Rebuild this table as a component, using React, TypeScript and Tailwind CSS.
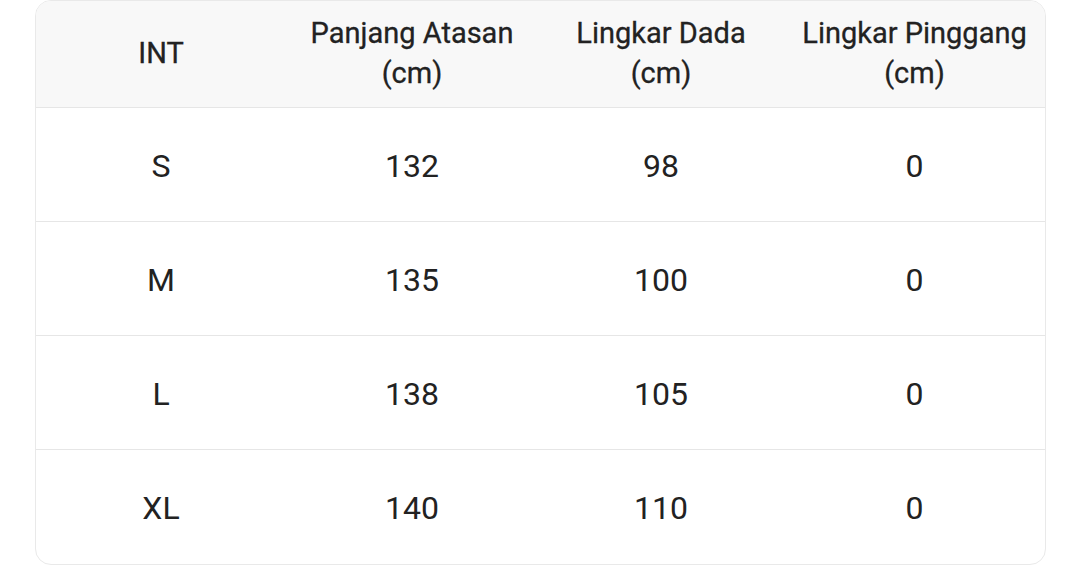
const headers = [
	["INT"],
	["Panjang Atasan", "(cm)"],
	["Lingkar Dada", "(cm)"],
	["Lingkar Pinggang", "(cm)"],
]

const rows = [
	["S", "132", "98", "0"],
	["M", "135", "100", "0"],
	["L", "138", "105", "0"],
	["XL", "140", "110", "0"],
]

const App = () => {
	return (
		<div className="w-[1080px] h-[579px] bg-white pl-[35px] font-['Roboto',sans-serif] text-[#222222]">
			<div className="w-[1011px] border border-[#e9e9e9] rounded-[16px] overflow-hidden">
				<div className="grid grid-cols-[250px_252px_246px_1fr] items-center h-[107px] bg-[#f8f8f8] border-b border-[#e6e6e6]">
					{headers.map((h, i) => (
						<div key={i} className="flex flex-col items-center text-[29px] leading-[40px] pb-[3px] [-webkit-text-stroke:0.3px_#222222]">
							{h.map((line) => <span key={line}>{line}</span>)}
						</div>
					))}
				</div>
				{rows.map((r, i) => (
					<div key={i} className={"grid grid-cols-[250px_252px_246px_1fr] items-center h-[114px] " + (i < rows.length - 1 ? "border-b border-[#e6e6e6]" : "")}>
						{r.map((c, j) => (
							<div key={j} className="text-center text-[32px] leading-[40px] pt-[2px]">{c}</div>
						))}
					</div>
				))}
			</div>
		</div>
	)
}

export default App;
